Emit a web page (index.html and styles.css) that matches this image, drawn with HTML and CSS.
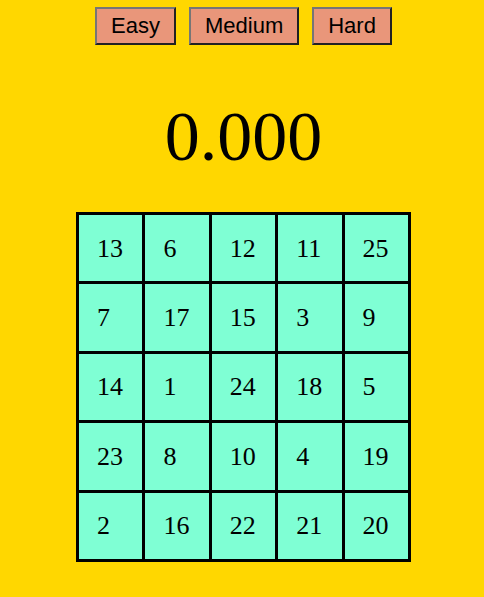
FILE: index.html
```html
<!DOCTYPE html>
<html>
<head>
<meta charset="utf-8">
<link rel="stylesheet" href="styles.css">
</head>
<body>
<div class="controls">
  <button class="btn">Easy</button>
  <button class="btn">Medium</button>
  <button class="btn">Hard</button>
</div>
<div class="timer">0.000</div>
<div class="board">
  <div class="cell">13</div><div class="cell">6</div><div class="cell">12</div><div class="cell">11</div><div class="cell">25</div>
  <div class="cell">7</div><div class="cell">17</div><div class="cell">15</div><div class="cell">3</div><div class="cell">9</div>
  <div class="cell">14</div><div class="cell">1</div><div class="cell">24</div><div class="cell">18</div><div class="cell">5</div>
  <div class="cell">23</div><div class="cell">8</div><div class="cell">10</div><div class="cell">4</div><div class="cell">19</div>
  <div class="cell">2</div><div class="cell">16</div><div class="cell">22</div><div class="cell">21</div><div class="cell">20</div>
</div>
</body>
</html>
```
FILE: styles.css
```css
html, body {
  margin: 0;
  padding: 0;
  background: #ffd700;
}
body {
  font-family: "Liberation Serif", "Times New Roman", serif;
  color: #000;
  padding-left: 3px;
  display: flex;
  flex-direction: column;
  align-items: center;
}
.controls {
  display: flex;
  gap: 13px;
  padding-top: 7px;
}
.btn {
  font-family: "Liberation Sans", Arial, sans-serif;
  font-size: 22px;
  line-height: 26px;
  background: #e9967a;
  color: #000;
  border: 2px solid;
  border-color: #767676 #222 #222 #767676;
  padding: 4px 14px;
  margin: 0;
}
.timer {
  font-size: 70px;
  line-height: 80px;
  margin-top: 52px;
}
.board {
  margin-top: 35px;
  display: grid;
  grid-template-columns: repeat(5, 63.4px);
  grid-template-rows: repeat(5, 66.4px);
  gap: 3px;
  padding: 3px;
  background: #000;
}
.cell {
  background: #7fffd4;
  font-size: 26px;
  display: flex;
  align-items: center;
  padding-left: 18px;
  padding-top: 1px;
}
```
